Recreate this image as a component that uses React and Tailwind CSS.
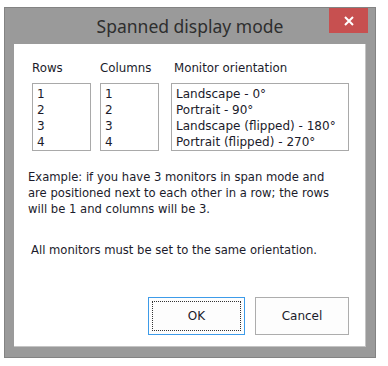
const rows = ['1', '2', '3', '4'];
const orientations = [
  'Landscape - 0°',
  'Portrait - 90°',
  'Landscape (flipped) - 180°',
  'Portrait (flipped) - 270°',
];

function ListBox({ items, width }) {
  return (
    <div className={`${width} h-[68px] border border-[#a9a9a9] bg-white px-[4px] pt-[2px] text-[12px] leading-[16px]`}>
      {items.map((item) => (
        <div key={item}>{item}</div>
      ))}
    </div>
  );
}

export default function App() {
  return (
    <div
      className="w-[388px] h-[366px] bg-white pl-[4px] pt-[7px] text-[12px] text-[#1b1b2b]"
      style={{ fontFamily: '"DejaVu Sans", Verdana, sans-serif' }}
    >
      <div className="relative w-[372px] h-[351px] bg-[#9a9a9a] border border-[#838383] flex flex-col">
        {/* title bar */}
        <div className="h-[36px] flex items-center justify-center">
          <span
            className="text-[17.5px] text-[#2e2e2e]"
            style={{ fontFamily: '"Noto Sans", "Open Sans", sans-serif' }}
          >
            Spanned display mode
          </span>
        </div>
        <div className="absolute top-0 right-[7px] w-[39px] h-[25px] bg-[#c75050] flex items-center justify-center">
          <svg width="10" height="10" viewBox="0 0 10 10">
            <path d="M1 1 L9 9 M9 1 L1 9" stroke="white" strokeWidth="2" />
          </svg>
        </div>

        {/* client area */}
        <div className="mx-[9px] mb-[10px] flex-1 bg-white border-r border-b border-[#c4c4c4] flex flex-col">
          <div className="flex pt-[16px] pl-[18px] text-[11.8px]">
            <div className="flex flex-col w-[59px]">
              <span className="leading-[16px]">Rows</span>
              <div className="mt-[7px]"><ListBox items={rows} width="w-[59px]" /></div>
            </div>
            <div className="flex flex-col w-[59px] ml-[9px]">
              <span className="leading-[16px]">Columns</span>
              <div className="mt-[7px]"><ListBox items={rows} width="w-[59px]" /></div>
            </div>
            <div className="flex flex-col w-[178px] ml-[12px]">
              <span className="leading-[16px] pl-[3px]">Monitor orientation</span>
              <div className="mt-[7px]"><ListBox items={orientations} width="w-[178px]" /></div>
            </div>
          </div>

          <p className="mt-[18px] ml-[14px] text-[11.6px] leading-[16px]">
            Example: if you have 3 monitors in span mode and
            <br />
            are positioned next to each other in a row; the rows
            <br />
            will be 1 and columns will be 3.
          </p>

          <p className="mt-[25px] ml-[17px] text-[11.6px] leading-[16px]">
            All monitors must be set to the same orientation.
          </p>

          <div className="mt-[39px] flex justify-end gap-[10px] pr-[16px]">
            <button className="relative w-[97px] h-[38px] bg-[#fdfdfd] border border-[#3d9be9] text-[#1b1b2b]">
              <span className="absolute inset-[3px] border border-dotted border-[#333]" />
              OK
            </button>
            <button className="w-[94px] h-[38px] bg-[#fdfdfd] border border-[#adadad] text-[#1b1b2b]">
              Cancel
            </button>
          </div>
        </div>
      </div>
    </div>
  );
}
